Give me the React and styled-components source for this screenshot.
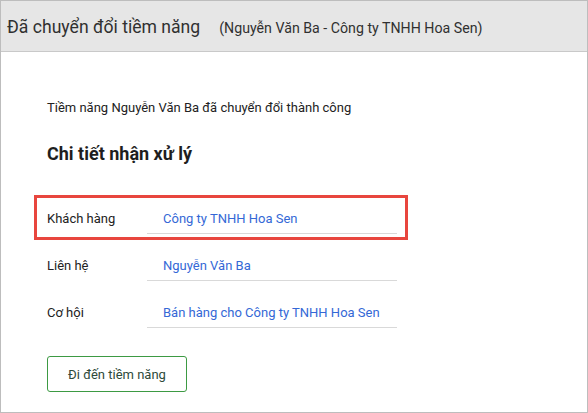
import React from 'react';
import styled, { createGlobalStyle } from 'styled-components';

const GlobalStyle = createGlobalStyle`
    body {
        margin: 0;
        background: #ffffff;
        font-family: Roboto, 'Liberation Sans', sans-serif;
    }
`;

const Frame = styled.div`
    width: 588px;
    height: 413px;
    box-sizing: border-box;
    border: 1px solid #bdbdbd;
    background: #ffffff;
    display: flex;
    flex-direction: column;
`;

const Header = styled.div`
    height: 51px;
    box-sizing: border-box;
    background: #e6e6e6;
    border-bottom: 1px solid #c9c9c9;
    display: flex;
    align-items: center;
    padding-left: 6px;
    padding-top: 2px;
    color: #303030;
`;

const Title = styled.h1`
    margin: 0;
    font-size: 17.6px;
    font-weight: 400;
`;

const SubTitle = styled.span`
    margin-left: 19px;
    font-size: 14.2px;
    padding-top: 2px;
`;

const Body = styled.div`
    padding: 48px 0 0 46px;
    display: flex;
    flex-direction: column;
    align-items: flex-start;
`;

const Message = styled.p`
    margin: 0;
    font-size: 13px;
    line-height: 16px;
    color: #222;
`;

const SectionTitle = styled.h2`
    margin: 27px 0 30px;
    font-size: 18px;
    line-height: 22px;
    font-weight: 700;
    color: #1e1e1e;
`;

const Highlight = styled.div`
    margin: 0 0 11px -13px;
    padding: 6px 8px 3px 10px;
    border: 3px solid #e8463e;
`;

const Field = styled.div`
    display: grid;
    grid-template-columns: 100px 250px;
    height: 30px;
    margin-bottom: ${p => p.$last ? '0' : '17px'};
`;

const Label = styled.span`
    font-size: 13px;
    line-height: 29px;
    color: #222;
`;

const Value = styled.span`
    font-size: 13px;
    line-height: 29px;
    padding-left: 16px;
    color: #3468d6;
    border-bottom: 1px solid #d9d9d9;
`;

const GoButton = styled.button`
    margin-top: 28px;
    width: 140px;
    height: 36px;
    background: #ffffff;
    border: 1px solid #3d9a43;
    border-radius: 3px;
    font-family: Roboto, 'Liberation Sans', sans-serif;
    font-size: 13px;
    color: #2e4a3a;
    cursor: pointer;
`;

export default function App () {
    return (
        <>
            <GlobalStyle />
            <Frame>
                <Header>
                    <Title>Đã chuyển đổi tiềm năng</Title>
                    <SubTitle>(Nguyễn Văn Ba - Công ty TNHH Hoa Sen)</SubTitle>
                </Header>
                <Body>
                    <Message>Tiềm năng Nguyễn Văn Ba đã chuyển đổi thành công</Message>
                    <SectionTitle>Chi tiết nhận xử lý</SectionTitle>

                    <Highlight>
                        <Field $last>
                            <Label>Khách hàng</Label>
                            <Value>Công ty TNHH Hoa Sen</Value>
                        </Field>
                    </Highlight>

                    <Field>
                        <Label>Liên hệ</Label>
                        <Value>Nguyễn Văn Ba</Value>
                    </Field>
                    <Field $last>
                        <Label>Cơ hội</Label>
                        <Value>Bán hàng cho Công ty TNHH Hoa Sen</Value>
                    </Field>

                    <GoButton>Đi đến tiềm năng</GoButton>
                </Body>
            </Frame>
        </>
    );
}
